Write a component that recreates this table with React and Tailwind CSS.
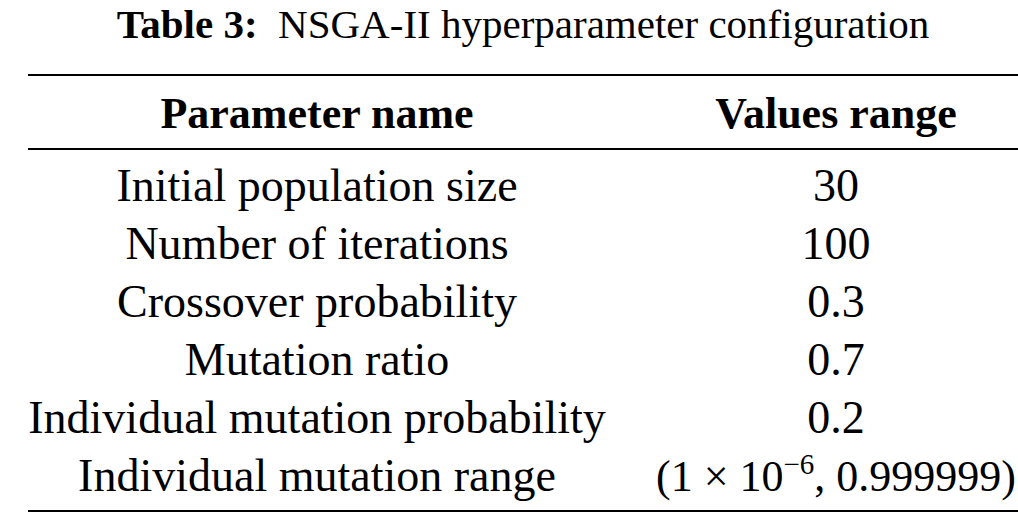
import React from "react";

const rows = [
  ["Initial population size", "30"],
  ["Number of iterations", "100"],
  ["Crossover probability", "0.3"],
  ["Mutation ratio", "0.7"],
  ["Individual mutation probability", "0.2"],
  ["Individual mutation range", null],
];

export default function App() {
  return (
    <div
      className="w-[1018px] h-[515px] bg-white text-black overflow-hidden"
      style={{ fontFamily: '"Liberation Serif", "Times New Roman", serif' }}
    >
      <div className="ml-[28px] w-[990px]">
        <div className="h-[74px] text-center text-[41px] leading-[48px] whitespace-pre">
          <span className="font-bold">Table 3:</span>
          <span>{"  "}NSGA-II hyperparameter configuration</span>
        </div>
        <div className="h-[2px] bg-black" />
        <div className="grid grid-cols-[578px_364px] gap-x-[48px] h-[72px] items-center text-[44px] font-bold leading-[76px] text-center">
          <div>Parameter name</div>
          <div>Values range</div>
        </div>
        <div className="h-[2px] bg-black" />
        <div className="pt-[7px] pb-[5px]">
          {rows.map(([name, val], i) => (
            <div
              key={i}
              className="grid grid-cols-[578px_364px] gap-x-[48px] h-[58px] text-[46px] leading-[58px] text-center"
            >
              <div className="whitespace-nowrap">{name}</div>
              <div className="whitespace-nowrap">
                {val !== null ? (
                  val
                ) : (
                  <span className="text-[44px]">
                    (1 × 10<sup className="text-[29px] -top-[17px]">−6</sup>, 0.999999)
                  </span>
                )}
              </div>
            </div>
          ))}
        </div>
        <div className="h-[2px] bg-black" />
      </div>
    </div>
  );
}
